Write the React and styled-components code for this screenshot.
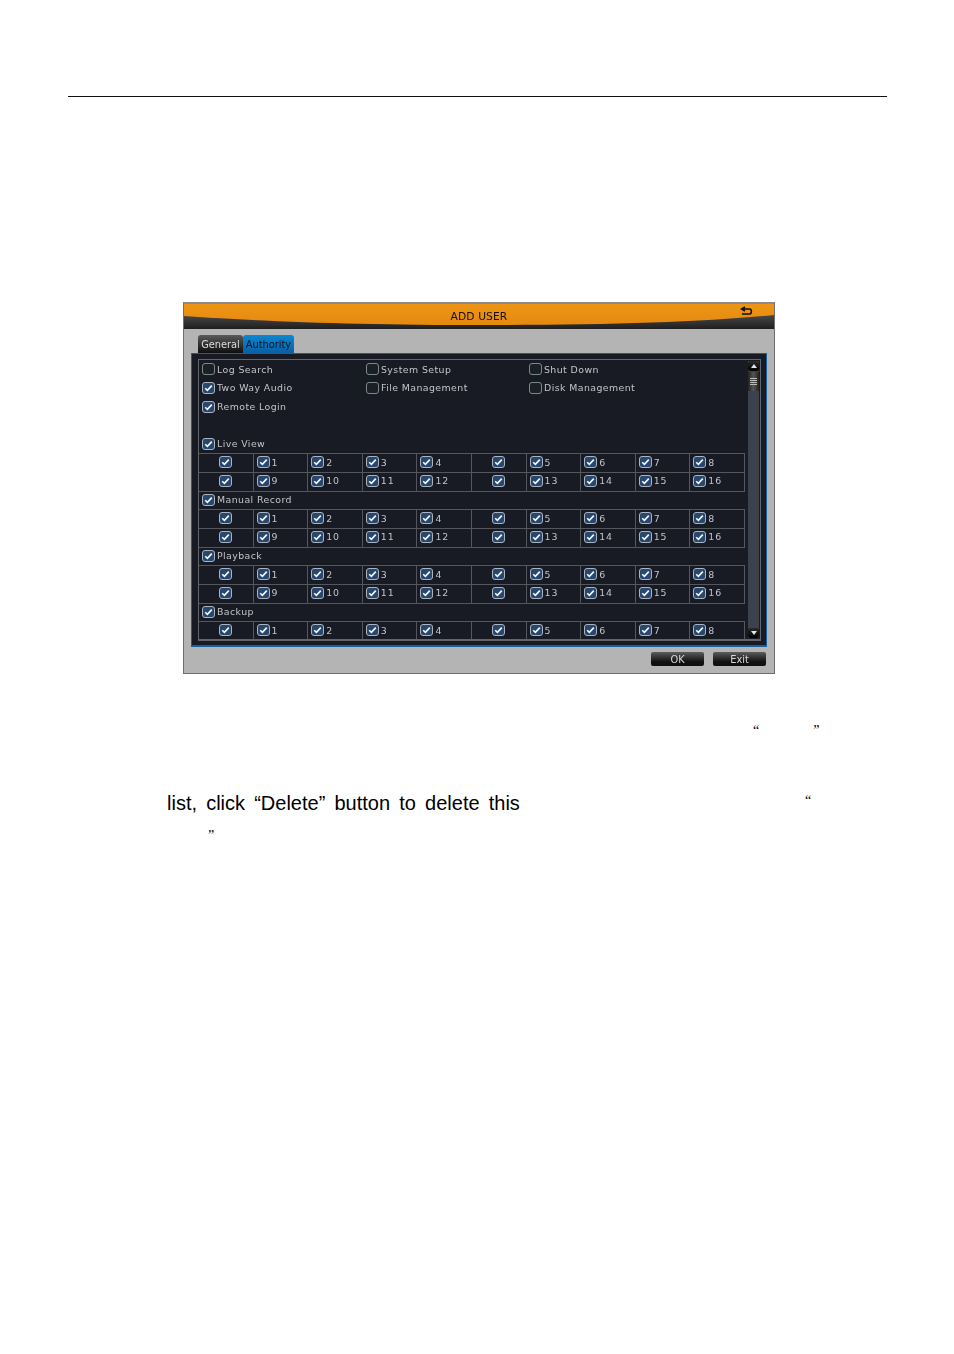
import React from "react";
import styled, { createGlobalStyle } from "styled-components";

const Global = createGlobalStyle`
  html, body { margin: 0; padding: 0; background: #fff; }
  #root { width: 954px; height: 1354px; overflow: hidden; }
`;

const Page = styled.div`
  width: 954px;
  height: 1354px;
  padding-top: 96px;
  box-sizing: border-box;
  font-family: "Liberation Sans", Arial, sans-serif;
  color: #000;
`;
const HeadRule = styled.div`
  height: 1px;
  margin: 0 67px 0 68px;
  background: #111;
`;
const Dialog = styled.div`
  width: 592px;
  height: 372px;
  margin: 205px 0 0 183px;
  box-sizing: border-box;
  border: 1px solid #6e6e6e;
  border-top: 2px solid #8a8a8a;
  background: #b4b4b4;
  display: flex;
  flex-direction: column;
  filter: blur(0.35px);
`;
const TitleBar = styled.div`
  position: relative;
  height: 25px;
  flex: none;
  background: #26262a;
  display: flex;
  align-items: center;
  justify-content: center;
  font: 10.7px "DejaVu Sans", sans-serif;
  letter-spacing: 0.1px;
  color: #111;
`;
const Swoosh = styled.svg`
  position: absolute;
  inset: 0;
  width: 100%;
  height: 100%;
`;
const TitleText = styled.span`
  position: relative;
  margin-top: -1px;
`;
const BackIcon = styled.svg`
  position: absolute;
  right: 21px;
  top: 2px;
`;
const Tabs = styled.div`
  display: flex;
  height: 18px;
  margin: 6px 0 0 14px;
  flex: none;
`;
const Tab = styled.div`
  width: ${(p) => p.$w}px;
  box-sizing: border-box;
  border-radius: 3px 3px 0 0;
  text-align: center;
  font: 9.8px/19px "DejaVu Sans", sans-serif;
  background: ${(p) =>
    p.$active ? "linear-gradient(#0b88d2, #0a5ea4)" : "linear-gradient(#5a5a5a, #0e0e10)"};
  color: ${(p) => (p.$active ? "#0b1526" : "#dcdcdc")};
`;
const Panel = styled.div`
  margin: 0 7px 0 7px;
  height: 294px;
  flex: none;
  box-sizing: border-box;
  background: #181a24;
  border: 1px solid #14609f;
  border-bottom-width: 2px;
  padding: 5px 5px 5px 6px;
`;
const Inner = styled.div`
  height: 282px;
  box-sizing: border-box;
  border: 1px solid #62656b;
  border-bottom-width: 2px;
  display: flex;
`;
const Content = styled.div`
  width: 546px;
  flex: none;
  overflow: hidden;
`;
const TopGrid = styled.div`
  display: grid;
  grid-template-columns: 164px 163px 1fr;
  grid-auto-rows: 18.67px;
`;
const Section = styled.div`
  height: 18.67px;
  display: flex;
  align-items: center;
`;
const Label = styled.span`
  display: flex;
  align-items: center;
  gap: 2px;
  height: 18.67px;
  padding-left: 3px;
  font: 9.4px "DejaVu Sans", sans-serif;
  letter-spacing: 0.42px;
  color: #c4c5c8;
  white-space: nowrap;
`;
const Table = styled.div`
  display: grid;
  grid-template-columns: repeat(10, 54.6px);
  grid-auto-rows: 18.67px;
  border-top: 1px solid #55575e;
  margin-bottom: -1px;
`;
const Cell = styled.div`
  box-sizing: border-box;
  border-right: 1px solid #55575e;
  border-bottom: 1px solid #55575e;
  display: flex;
  align-items: center;
  justify-content: ${(p) => (p.$center ? "center" : "flex-start")};
  padding: 0 0 2px ${(p) => (p.$center ? 0 : 3)}px;
  gap: 2px;
  font: 9.4px "DejaVu Sans", sans-serif;
  letter-spacing: 0.9px;
  color: #c4c5c8;
`;
const Box = styled.span`
  width: 13px;
  height: 12px;
  flex: none;
  box-sizing: border-box;
  border-radius: 3px;
  border: 1px solid ${(p) => (p.$on ? "#aab4c0" : "#7c8a86")};
  background: ${(p) => (p.$on ? "#27476f" : "#1a2126")};
  display: inline-flex;
  align-items: center;
  justify-content: center;
`;
const Scrollbar = styled.div`
  width: 11px;
  margin-left: 3px;
  margin-top: 1px;
  margin-bottom: 1px;
  background: #3b424d;
  display: flex;
  flex-direction: column;
  justify-content: space-between;
  position: relative;
`;
const ScrollBtn = styled.div`
  height: 10px;
  background: linear-gradient(#2a2a2a, #000);
  border-radius: 2px;
  display: flex;
  align-items: center;
  justify-content: center;
`;
const Arrow = styled.span`
  width: 0;
  height: 0;
  border-left: 3px solid transparent;
  border-right: 3px solid transparent;
  border-${(p) => (p.$down ? "top" : "bottom")}: 4px solid #e4e4e4;
`;
const Thumb = styled.div`
  position: absolute;
  top: 11px;
  left: 0;
  right: 0;
  height: 19px;
  background: linear-gradient(90deg, #222, #555, #222);
  display: flex;
  flex-direction: column;
  justify-content: center;
  gap: 1px;
  padding: 0 2px;
  box-sizing: border-box;
`;
const Grip = styled.i`
  display: block;
  height: 1px;
  background: #bbb;
`;
const Footer = styled.div`
  display: flex;
  justify-content: flex-end;
  gap: 9px;
  margin: 5px 8px 0 0;
`;
const Btn = styled.div`
  width: 53px;
  height: 14px;
  border-radius: 2px;
  background: linear-gradient(#5c5c5c, #101010 70%);
  color: #d8d8d8;
  text-align: center;
  font: 9.8px/16px "DejaVu Sans", sans-serif;
`;
const Body = styled.div`
  line-height: 23px;
  padding-top: 49px;
`;
const Line = styled.div`
  height: ${(p) => p.$h}px;
  display: flex;
  align-items: flex-start;
`;
const Sentence = styled.span`
  margin-left: 167px;
  width: 353px;
  white-space: nowrap;
  word-spacing: 3.6px;
  font-size: 20px;
`;
const Quote = styled.span`
  margin-left: ${(p) => p.$x}px;
  margin-top: ${(p) => p.$top || 0}px;
  font: 14px/16px "Liberation Serif", serif;
`;

const Check = ({ on = true }) => (
  <Box $on={on}>
    {on && (
      <svg width="9" height="8" viewBox="0 0 9 8">
        <path d="M1.2 4.2 3.4 6.4 7.8 1.6" fill="none" stroke="#f4f6f8" strokeWidth="1.6" />
      </svg>
    )}
  </Box>
);

const Opt = ({ on, children }) => (
  <Label>
    <Check on={on} />
    {children}
  </Label>
);

const rows = [
  [1, 2, 3, 4, 5, 6, 7, 8],
  [9, 10, 11, 12, 13, 14, 15, 16],
];

const ChannelRow = ({ nums }) => (
  <>
    <Cell $center><Check /></Cell>
    {nums.slice(0, 4).map((n) => (
      <Cell key={n}><Check />{n}</Cell>
    ))}
    <Cell $center><Check /></Cell>
    {nums.slice(4).map((n) => (
      <Cell key={n}><Check />{n}</Cell>
    ))}
  </>
);

export default function App() {
  return (
    <Page>
      <Global />
      <HeadRule />
      <Dialog>
        <TitleBar>
          <Swoosh viewBox="0 0 590 25" preserveAspectRatio="none">
            <defs>
              <linearGradient id="or" x1="0" y1="0" x2="0" y2="1">
                <stop offset="0" stopColor="#ee9415" />
                <stop offset="1" stopColor="#e58a10" />
              </linearGradient>
              <linearGradient id="dk" x1="0" y1="0" x2="0" y2="1">
                <stop offset="0" stopColor="#6a6a6a" />
                <stop offset="1" stopColor="#1e1e20" />
              </linearGradient>
            </defs>
            <rect width="590" height="25" fill="url(#dk)" />
            <path d="M0 0H590V11C520 18 420 21 300 21C180 21 90 18 0 12Z" fill="url(#or)" />
          </Swoosh>
          <TitleText>ADD USER</TitleText>
          <BackIcon width="13" height="10" viewBox="0 0 13 10">
            <path d="M5 1 1.5 3 5 5M2 3H9.5C12 3 12 8 9.5 8H2" fill="none" stroke="#111" strokeWidth="1.5" />
          </BackIcon>
        </TitleBar>
        <Tabs>
          <Tab $w={45}>General</Tab>
          <Tab $w={51} $active>Authority</Tab>
        </Tabs>
        <Panel>
          <Inner>
            <Content>
              <TopGrid>
                <Opt on={false}>Log Search</Opt>
                <Opt on={false}>System Setup</Opt>
                <Opt on={false}>Shut Down</Opt>
                <Opt>Two Way Audio</Opt>
                <Opt on={false}>File Management</Opt>
                <Opt on={false}>Disk Management</Opt>
                <Opt>Remote Login</Opt>
              </TopGrid>
              <Section />
              <Section><Opt>Live View</Opt></Section>
              <Table><ChannelRow nums={rows[0]} /><ChannelRow nums={rows[1]} /></Table>
              <Section><Opt>Manual Record</Opt></Section>
              <Table><ChannelRow nums={rows[0]} /><ChannelRow nums={rows[1]} /></Table>
              <Section><Opt>Playback</Opt></Section>
              <Table><ChannelRow nums={rows[0]} /><ChannelRow nums={rows[1]} /></Table>
              <Section><Opt>Backup</Opt></Section>
              <Table><ChannelRow nums={rows[0]} /></Table>
            </Content>
            <Scrollbar>
              <ScrollBtn><Arrow /></ScrollBtn>
              <Thumb><Grip /><Grip /><Grip /><Grip /></Thumb>
              <ScrollBtn><Arrow $down /></ScrollBtn>
            </Scrollbar>
          </Inner>
        </Panel>
        <Footer>
          <Btn>OK</Btn>
          <Btn>Exit</Btn>
        </Footer>
      </Dialog>
      <Body>
        <Line $h={69}>
          <Quote $x={753}>“</Quote>
          <Quote $x={54}>”</Quote>
        </Line>
        <Line $h={36}>
          <Sentence>list, click “Delete” button to delete this</Sentence>
          <Quote $x={285} $top={1}>“</Quote>
        </Line>
        <Line $h={20}>
          <Quote $x={208}>”</Quote>
        </Line>
      </Body>
    </Page>
  );
}
